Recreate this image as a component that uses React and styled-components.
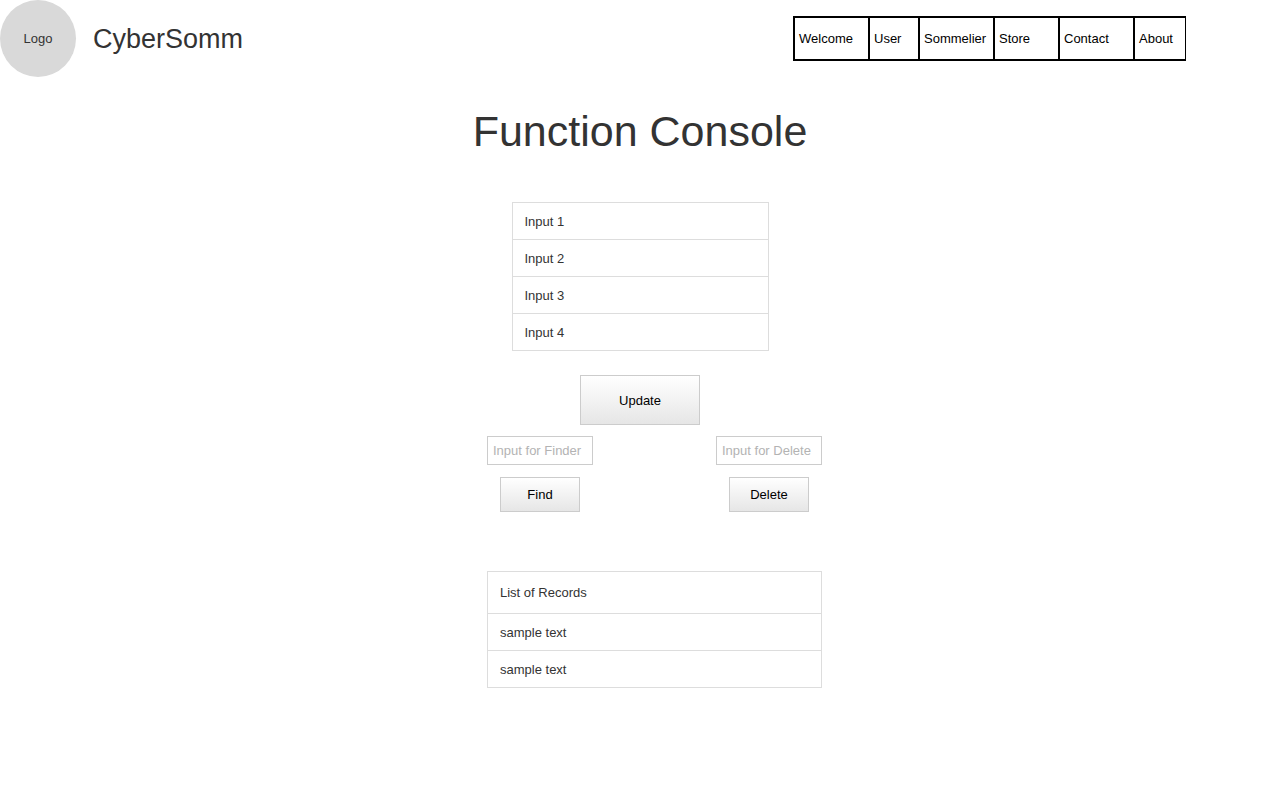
import React from "react";
import styled, { createGlobalStyle } from "styled-components";

const GlobalStyle = createGlobalStyle`
  *, *::before, *::after { box-sizing: border-box; }
  body {
    margin: 0;
    background: #fff;
    color: #333;
    font: 13px/16px "Liberation Sans", Arial, sans-serif;
  }
  input, button { font: inherit; }
`;

const Header = styled.header`
  display: flex;
  align-items: center;
  padding-right: 94px;
`;

const Logo = styled.div`
  display: flex;
  align-items: center;
  justify-content: center;
  flex: none;
  width: 76px;
  height: 77px;
  border-radius: 50%;
  background: #d9d9d9;
`;

const Brand = styled.div`
  margin-left: 17px;
  font-size: 27px;
  line-height: 32px;
`;

const Nav = styled.nav`
  display: flex;
  margin-left: auto;
  border: solid #000;
  border-width: 2px 1px 2px 0;
`;

const NavLink = styled.a`
  width: ${(p) => p.$width}px;
  padding: 13px 0 12px 4px;
  border-left: 2px solid #000;
  color: #000;
  text-decoration: none;
`;

const Main = styled.main`
  display: flex;
  flex-direction: column;
  align-items: center;
`;

const Title = styled.h1`
  margin: 29px 0 0;
  font-size: 43px;
  font-weight: 400;
  line-height: 50px;
`;

const UpdateForm = styled.form`
  display: flex;
  flex-direction: column;
  align-items: center;
  gap: 24px;
  margin-top: 46px;
`;

const FieldList = styled.div`
  display: flex;
  flex-direction: column;
  width: 257px;
  border: 1px solid #ddd;
`;

const Field = styled.input`
  width: 100%;
  height: ${(p) => (p.$last ? 36 : 37)}px;
  padding: 0 12px;
  border: 0;
  border-bottom: ${(p) => (p.$last ? 0 : 1)}px solid #ddd;
  border-radius: 0;
  background: #fff;
  color: #333;
`;

const Button = styled.button`
  width: ${(p) => (p.$large ? 120 : 80)}px;
  height: ${(p) => (p.$large ? 50 : 35)}px;
  padding: ${(p) => (p.$large ? 2 : 0)}px 0 0;
  border: 1px solid #ccc;
  background: linear-gradient(#fff, #e6e6e6);
  color: #000;
`;

const Lookup = styled.section`
  width: 335px;
  margin: 11px 0 0 29px;
`;

const Actions = styled.div`
  display: flex;
  justify-content: space-between;
`;

const ActionForm = styled.form`
  display: flex;
  flex-direction: column;
  align-items: center;
  gap: 12px;
`;

const SearchInput = styled.input`
  width: 106px;
  height: 29px;
  padding: 0 5px;
  border: 1px solid #ccc;
  border-radius: 0;
  background: #fff;
  color: #333;
  &::placeholder { color: #b3b3b3; opacity: 1; }
`;

const Records = styled.table`
  width: 100%;
  margin-top: 59px;
  border-collapse: collapse;
`;

const RecordsHead = styled.th`
  height: 42px;
  padding: 0 12px;
  border: 1px solid #ddd;
  font-weight: 400;
  text-align: left;
`;

const RecordCell = styled.td`
  height: 37px;
  padding: 2px 12px 0;
  border: 1px solid #ddd;
`;

const links = [
  ["Welcome", 75],
  ["User", 50],
  ["Sommelier", 75],
  ["Store", 65],
  ["Contact", 75],
  ["About", 52],
];
const fields = ["Input 1", "Input 2", "Input 3", "Input 4"];
const actions = [
  ["Find", "Input for Finder"],
  ["Delete", "Input for Delete"],
];
const records = ["sample text", "sample text"];

const hold = (event) => event.preventDefault();

export default function App() {
  return (
    <>
      <GlobalStyle />
      <Header>
        <Logo>Logo</Logo>
        <Brand>CyberSomm</Brand>
        <Nav>
          {links.map(([label, width]) => (
            <NavLink key={label} href={`#${label.toLowerCase()}`} $width={width}>
              {label}
            </NavLink>
          ))}
        </Nav>
      </Header>
      <Main>
        <Title>Function Console</Title>
        <UpdateForm onSubmit={hold}>
          <FieldList>
            {fields.map((name, i) => (
              <Field
                key={name}
                type="text"
                aria-label={name}
                defaultValue={name}
                $last={i === fields.length - 1}
              />
            ))}
          </FieldList>
          <Button type="submit" $large>Update</Button>
        </UpdateForm>
        <Lookup>
          <Actions>
            {actions.map(([label, hint]) => (
              <ActionForm key={label} onSubmit={hold}>
                <SearchInput type="text" aria-label={hint} placeholder={hint} />
                <Button type="submit">{label}</Button>
              </ActionForm>
            ))}
          </Actions>
          <Records>
            <thead>
              <tr>
                <RecordsHead scope="col">List of Records</RecordsHead>
              </tr>
            </thead>
            <tbody>
              {records.map((text, i) => (
                <tr key={i}>
                  <RecordCell>{text}</RecordCell>
                </tr>
              ))}
            </tbody>
          </Records>
        </Lookup>
      </Main>
    </>
  );
}
